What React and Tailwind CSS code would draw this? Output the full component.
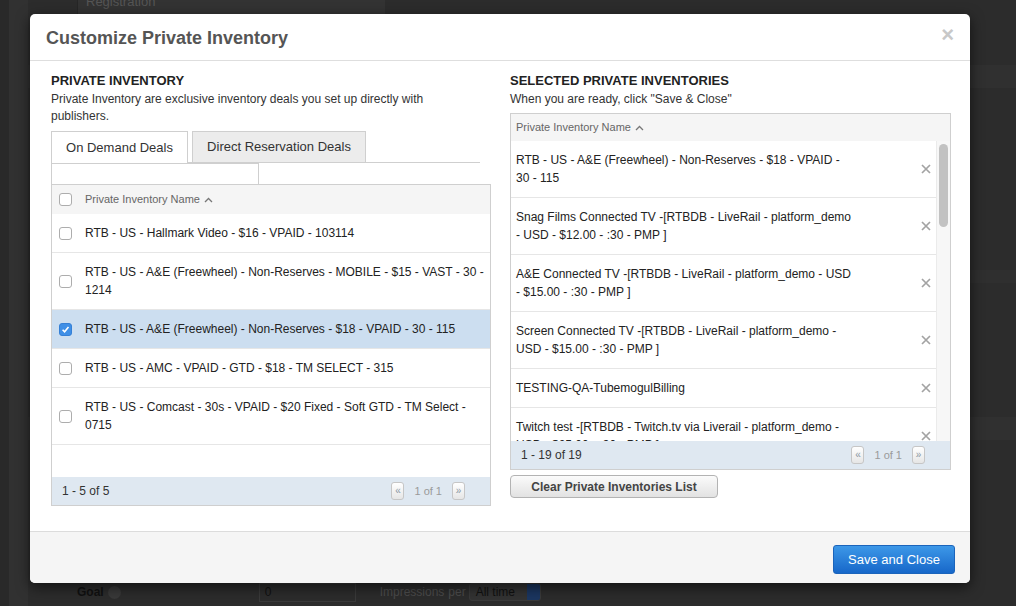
import React from 'react';

const leftRows = [
  { name: 'RTB - US - Hallmark Video - $16 - VPAID - 103114' },
  { name: 'RTB - US - A&E (Freewheel) - Non-Reserves - MOBILE - $15 - VAST - 30 - 1214' },
  { name: 'RTB - US - A&E (Freewheel) - Non-Reserves - $18 - VPAID - 30 - 115', checked: true },
  { name: 'RTB - US - AMC - VPAID - GTD - $18 - TM SELECT - 315' },
  { name: 'RTB - US - Comcast - 30s - VPAID - $20 Fixed - Soft GTD - TM Select - 0715' },
];

const rightRows = [
  'RTB - US - A&E (Freewheel) - Non-Reserves - $18 - VPAID - 30 - 115',
  'Snag Films Connected TV -[RTBDB - LiveRail - platform_demo - USD - $12.00 - :30 - PMP ]',
  'A&E Connected TV -[RTBDB - LiveRail - platform_demo - USD - $15.00 - :30 - PMP ]',
  'Screen Connected TV -[RTBDB - LiveRail - platform_demo - USD - $15.00 - :30 - PMP ]',
  'TESTING-QA-TubemogulBilling',
  'Twitch test -[RTBDB - Twitch.tv via Liverail - platform_demo - USD - $25.00 - :30 - PMP ]',
];

function Checkbox({ checked }) {
  return (
    <span
      className={`shrink-0 w-[13px] h-[13px] rounded-[3px] border flex items-center justify-center ${
        checked ? 'bg-[#3f8fe6] border-[#3580d6]' : 'bg-white border-[#adadad]'
      }`}
    >
      {checked && (
        <svg width="9" height="9" viewBox="0 0 9 9">
          <path d="M1.6 4.7 L3.6 6.7 L7.5 2.1" stroke="white" strokeWidth="1.6" fill="none" />
        </svg>
      )}
    </span>
  );
}

function SortCaret() {
  return (
    <svg width="9" height="6" viewBox="0 0 9 6" className="ml-[4px]">
      <path d="M1 5 L4.5 1.5 L8 5" stroke="#777" strokeWidth="1.3" fill="none" />
    </svg>
  );
}

function RemoveX() {
  return (
    <svg width="10" height="10" viewBox="0 0 10 10" className="shrink-0">
      <path d="M1 1 L9 9 M9 1 L1 9" stroke="#a3a3a3" strokeWidth="1.7" />
    </svg>
  );
}

function PageBtn({ children }) {
  return (
    <span className="w-[13px] h-[18px] border border-[#c6c6c6] rounded-[3px] bg-gradient-to-b from-white to-[#e6e6e6] flex items-center justify-center text-[10px] leading-none text-[#8a96a3]">
      {children}
    </span>
  );
}

function TableFooter({ label }) {
  return (
    <div className="h-[28px] shrink-0 bg-[#dfe8f1] flex items-center justify-between pl-[10px] pr-[25px]">
      <span className="text-[12px] text-[#333]">{label}</span>
      <div className="flex items-center">
        <PageBtn>«</PageBtn>
        <span className="text-[11px] text-[#9a9a9a] mx-[10px]">1 of 1</span>
        <PageBtn>»</PageBtn>
      </div>
    </div>
  );
}

export default function App() {
  return (
    <div className="relative h-[606px] w-full overflow-hidden bg-[#2c2c2c] flex font-['Liberation_Sans',Arial,sans-serif]">
      {/* ── page behind the modal ── */}
      <div className="w-[9px] shrink-0 bg-[#292929]" />
      <div className="w-[19px] shrink-0 bg-[#313131]" />
      <div className="flex-1 flex flex-col">
        <div className="h-[14px] shrink-0 flex">
          <div className="ml-[49px] w-[308px] bg-[#333] border-l border-[#262626] overflow-hidden">
            <span className="block -mt-[8px] ml-[8px] text-[13px] text-[#555]">Registration</span>
          </div>
        </div>
        <div className="flex-1 flex flex-col">
          <div className="h-[51px]" />
          <div className="h-[23px] bg-[#303030]" />
          <div className="h-[182px]" />
          <div className="h-[13px] bg-[#2f2f2f]" />
          <div className="h-[134px]" />
          <div className="h-[23px] bg-[#303030]" />
          <div className="flex-1" />
        </div>
        <div className="h-[30px] shrink-0 flex items-center text-[12px] pt-[2px]">
          <span className="ml-[49px] font-bold text-[#111]">Goal</span>
          <span className="ml-[4px] w-[13px] h-[13px] rounded-full bg-[#393939]" />
          <div className="ml-[138px] w-[97px] h-[19px] border border-[#3a3a3a] bg-[#2c2c2c] pl-[5px] text-[#111] leading-[17px]">0</div>
          <span className="ml-[24px] text-[#4d4d4d]">Impressions</span>
          <span className="ml-[4px] text-[#4d4d4d]">per</span>
          <div className="ml-[3px] w-[72px] h-[18px] border border-[#3a3a3a] rounded-[3px] bg-[#333] flex overflow-hidden">
            <span className="flex-1 pl-[6px] text-[#111] leading-[16px]">All time</span>
            <span className="w-[13px] bg-[#1b3660]" />
          </div>
        </div>
      </div>

      {/* ── Modal ── */}
      <div className="absolute left-[30px] top-[14px] w-[940px] h-[569px] bg-white rounded-[5px] shadow-[0_4px_14px_rgba(0,0,0,0.6)] flex flex-col overflow-hidden text-[#333]">
        {/* header */}
        <div className="h-[47px] shrink-0 border-b border-[#dedede] flex items-center justify-between pl-[16px] pr-[16px]">
          <h1 className="text-[18px] font-bold text-[#555] mt-[2px]">Customize Private Inventory</h1>
          <span className="text-[22px] font-bold text-[#c8c8c8] leading-none -mt-[4px]">×</span>
        </div>

        {/* body */}
        <div className="flex-1 flex pl-[21px] pt-[11px] gap-[19px]">
          {/* left column */}
          <div className="w-[440px] flex flex-col">
            <h2 className="text-[13px] font-bold text-[#222] leading-[18px]">PRIVATE INVENTORY</h2>
            <p className="mt-[1px] text-[12px] leading-[17px] w-[390px]">
              Private Inventory are exclusive inventory deals you set up directly with publishers.
            </p>
            <div className="mt-[6px] w-[429px] h-[32px] flex items-end gap-[4px] border-b border-[#cfcfcf]">
              <div className="w-[137px] h-[32px] -mb-px bg-white border border-b-0 border-[#cfcfcf] flex items-center justify-center text-[13px] text-[#333]">
                On Demand Deals
              </div>
              <div className="w-[174px] h-[31px] bg-[#ececec] border border-b-0 border-[#cfcfcf] flex items-center justify-center text-[13px] text-[#333]">
                Direct Reservation Deals
              </div>
            </div>
            <div className="w-[208px] h-[21px] border border-b-0 border-[#cfcfcf] bg-white" />
            <div className="h-[322px] border border-[#cfcfcf] flex flex-col">
              <div className="h-[29px] shrink-0 bg-[#f5f5f5] flex items-center pl-[7px]">
                <Checkbox />
                <span className="ml-[13px] text-[11px] text-[#666]">Private Inventory Name</span>
                <SortCaret />
              </div>
              <div className="flex-1">
                {leftRows.map((r) => (
                  <div
                    key={r.name}
                    className={`flex items-center pl-[7px] py-[10px] border-b border-[#e6e6e6] ${r.checked ? 'bg-[#ccdef0]' : 'bg-white'}`}
                  >
                    <Checkbox checked={r.checked} />
                    <span className="ml-[13px] w-[405px] text-[12px] leading-[18px] text-[#222]">{r.name}</span>
                  </div>
                ))}
              </div>
              <TableFooter label="1 - 5 of 5" />
            </div>
          </div>

          {/* right column */}
          <div className="w-[441px] flex flex-col">
            <h2 className="text-[13px] font-bold text-[#222] leading-[18px]">SELECTED PRIVATE INVENTORIES</h2>
            <p className="mt-[1px] text-[12px] leading-[17px]">When you are ready, click "Save &amp; Close"</p>
            <div className="mt-[5px] h-[357px] border border-[#cfcfcf] flex flex-col">
              <div className="h-[27px] shrink-0 bg-[#f5f5f5] flex items-center pl-[5px]">
                <span className="text-[11px] text-[#666]">Private Inventory Name</span>
                <SortCaret />
              </div>
              <div className="flex-1 flex overflow-hidden">
                <div className="flex-1 overflow-hidden">
                  {rightRows.map((r) => (
                    <div key={r} className="flex items-center pl-[5px] pr-[5px] py-[10px] border-b border-[#e6e6e6] bg-white">
                      <span className="w-[340px] text-[12px] leading-[18px] text-[#222]">{r}</span>
                      <span className="flex-1" />
                      <RemoveX />
                    </div>
                  ))}
                </div>
                <div className="w-[14px] shrink-0 bg-[#f7f7f7] border-l border-[#ebebeb] pt-[3px]">
                  <div className="mx-auto w-[9px] h-[83px] rounded-full bg-[#c2c2c2]" />
                </div>
              </div>
              <TableFooter label="1 - 19 of 19" />
            </div>
            <button className="mt-[5px] w-[208px] h-[23px] rounded-[4px] border border-[#b3b3b3] bg-gradient-to-b from-[#fbfbfb] to-[#e2e2e2] text-[12px] font-bold text-[#444]">
              Clear Private Inventories List
            </button>
          </div>
        </div>

        {/* footer */}
        <div className="h-[52px] shrink-0 border-t border-[#dcdcdc] bg-[#f5f5f5] flex items-center justify-end pr-[15px] pt-[4px]">
          <button className="w-[122px] h-[29px] rounded-[3px] border border-[#1b64bb] bg-gradient-to-b from-[#3d98e8] to-[#1767c9] text-white text-[13px]">
            Save and Close
          </button>
        </div>
      </div>
    </div>
  );
}
